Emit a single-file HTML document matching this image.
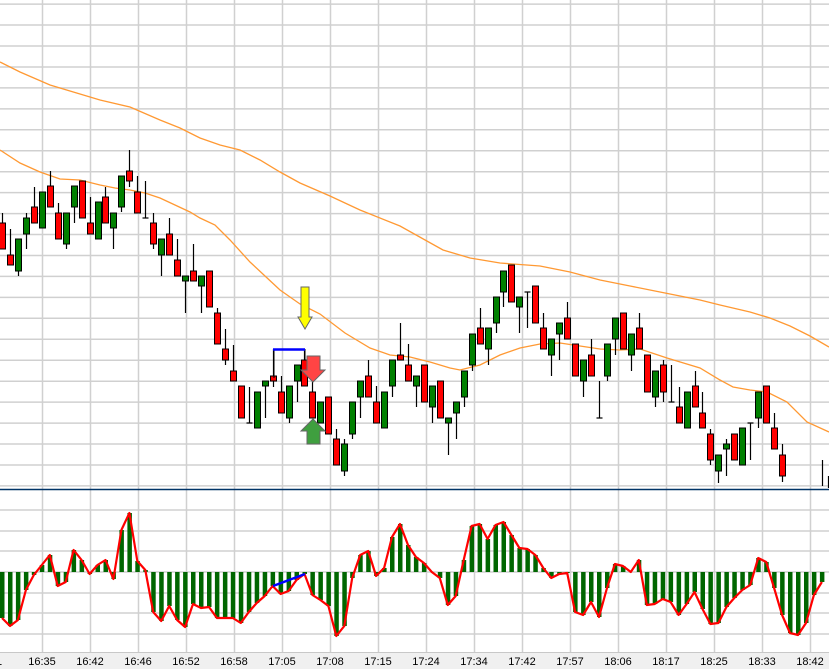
<!DOCTYPE html>
<html><head><style>
html,body{margin:0;padding:0;background:#fff;width:829px;height:669px;overflow:hidden}
svg{display:block}
text{font-family:"Liberation Sans",sans-serif;font-size:11px;fill:#000}
</style></head><body>
<svg id="s" width="829" height="669" xmlns="http://www.w3.org/2000/svg"></svg>
<script>
var s=document.getElementById('s'),h='';
h+='<rect x="0" y="0" width="829" height="669" fill="#fff"/>';
// grid
var gx=[];for(var x=-6;x<829;x+=48)gx.push(x);
gx.forEach(function(x){h+='<line x1="'+(x+0.5)+'" y1="0" x2="'+(x+0.5)+'" y2="652" stroke="#d0d0d0" stroke-width="1.5"/>';});
for(var y=4.1;y<488;y+=20.95)h+='<line x1="0" y1="'+y.toFixed(1)+'" x2="829" y2="'+y.toFixed(1)+'" stroke="#d0d0d0" stroke-width="1.5"/>';
[510,531,551,572,593,613,634].forEach(function(y){h+='<line x1="0" y1="'+y+'" x2="829" y2="'+y+'" stroke="#d0d0d0" stroke-width="1.5"/>';});
h+='<line x1="0" y1="489.5" x2="829" y2="489.5" stroke="#003366" stroke-width="1.5"/>';
// MAs
function pl(p){return '<polyline fill="none" stroke="#ff9933" stroke-width="1.3" points="'+p+'"/>';}
h+=pl("0,62 20,72 50,85 100,100 130,107 160,120 180,128 200,138 220,145 240,150 260,160 280,172 300,183 330,196 360,210 400,226 443,250 470,258 500,263 540,266 570,272 600,280 630,286 660,292 700,300 720,305 750,312 770,318 790,326 810,336 829,347");
h+=pl("0,150 20,163 40,172 60,179 80,180 100,185 115,188 130,190 145,193 160,198 175,205 190,212 200,218 215,225 230,240 250,262 265,276 280,290 300,304 320,314 345,333 370,348 390,355 410,357 430,362 450,368 460,370 480,365 500,355 520,348 540,344 560,343 580,346 600,349 620,350 640,349 667,358 700,368 720,380 733,387 750,390 767,392 787,402 807,422 829,432");
// candles [top,bot,hi,lo,c]
var C=[[223,249,213,249,'r'],[255,265,229,265,'r'],[239,271,239,276,'g'],[218,234,213,249,'g'],[207,223,187,223,'r'],[192,228,192,228,'g'],[186,207,171,207,'r'],[213,239,203,239,'r'],[213,244,213,249,'g'],[186,207,186,223,'g'],[181,218,181,218,'r'],[223,234,197,234,'r'],[202,239,202,239,'g'],[197,223,187,223,'r'],[213,228,213,249,'g'],[176,207,176,212,'g'],[171,181,150,187,'r'],[192,213,176,213,'r'],[218,218,181,218,'d'],[223,244,213,249,'r'],[239,255,239,276,'g'],[234,255,218,255,'r'],[260,276,239,276,'r'],[276,281,276,313,'g'],[271,281,244,281,'r'],[276,286,276,313,'g'],[271,307,271,307,'r'],[313,344,308,344,'r'],[349,360,329,365,'r'],[371,381,345,381,'r'],[386,418,386,418,'r'],[423,423,387,423,'d'],[392,428,392,428,'g'],[381,386,381,418,'g'],[376,381,349,387,'r'],[392,413,376,413,'r'],[386,418,386,423,'g'],[365,381,365,402,'g'],[360,386,349,386,'r'],[392,418,381,418,'r'],[402,423,402,423,'g'],[397,434,397,434,'r'],[439,465,429,465,'r'],[444,471,439,476,'g'],[402,434,402,439,'g'],[381,397,381,418,'g'],[376,397,360,397,'r'],[402,423,386,423,'r'],[392,428,392,428,'g'],[360,386,360,397,'g'],[355,360,323,360,'r'],[365,381,344,381,'r'],[376,386,376,407,'g'],[365,402,365,402,'r'],[386,407,386,423,'g'],[381,418,381,418,'r'],[418,423,418,455,'g'],[402,413,402,439,'g'],[371,397,371,407,'g'],[334,365,334,371,'g'],[328,344,308,344,'r'],[328,349,328,365,'g'],[297,323,297,333,'g'],[271,292,271,307,'g'],[265,302,265,302,'r'],[297,307,297,333,'g'],[292,292,292,328,'d'],[286,323,286,323,'r'],[328,349,313,349,'r'],[339,355,339,376,'g'],[323,334,323,360,'g'],[318,339,302,339,'r'],[344,376,344,376,'r'],[360,381,360,397,'g'],[355,376,339,376,'r'],[418,418,381,418,'d'],[344,376,344,381,'g'],[318,339,318,355,'g'],[313,349,313,349,'r'],[334,355,334,371,'g'],[328,349,313,349,'r'],[355,392,355,392,'r'],[371,397,371,407,'g'],[365,392,360,402,'r'],[402,402,365,402,'d'],[407,423,387,423,'r'],[392,428,392,428,'g'],[386,407,371,407,'r'],[413,428,392,428,'r'],[434,460,429,465,'r'],[455,471,455,483,'g'],[444,449,439,476,'g'],[434,460,434,460,'r'],[428,465,428,465,'g'],[423,423,423,460,'d'],[392,418,392,428,'g'],[386,423,386,423,'r'],[428,449,413,449,'r'],[455,476,444,482,'r']];
var SP=7.96;
C.forEach(function(c,i){var x=Math.round(2+SP*i)+0.5;
 h+='<line x1="'+x+'" y1="'+c[2]+'" x2="'+x+'" y2="'+c[3]+'" stroke="#000" stroke-width="1.2"/>';
 if(c[4]=='d'){h+='<line x1="'+(x-3)+'" y1="'+c[0]+'" x2="'+(x+3)+'" y2="'+c[0]+'" stroke="#000" stroke-width="1.2"/>';}
 else h+='<rect x="'+(x-3)+'" y="'+c[0]+'" width="6" height="'+Math.max(4,c[1]-c[0])+'" fill="'+(c[4]=='r'?'#ff0000':'#008000')+'" stroke="#000" stroke-width="1"/>';
});
h+='<line x1="822.5" y1="460" x2="822.5" y2="486" stroke="#000" stroke-width="1.2"/><line x1="828.5" y1="476" x2="828.5" y2="488" stroke="#000" stroke-width="1.2"/>';
// blue bracket
h+='<polyline points="274,378 274,349.5 305,349.5 305,360" fill="none" stroke="#000" stroke-width="1"/><line x1="273" y1="349.5" x2="305" y2="349.5" stroke="#0000ff" stroke-width="2.5"/>';
// arrows
h+='<polygon points="301,287 309,287 309,317 312,317 305,329 298,317 301,317" fill="#ffff00" stroke="#666" stroke-width="1"/>';
h+='<polygon points="307,356 320,356 320,370 325,370 313,382 301,370 307,370" fill="#ff4444" stroke="#666" stroke-width="1"/>';
h+='<polygon points="313,419 325,431 320,431 320,444 307,444 307,431 301,431" fill="#3f9f3f" stroke="#666" stroke-width="1"/>';
// histogram
var V=[618,626,620,590,575,565,555,586,582,550,560,574,565,560,579,530,513,561,570,612,621,606,620,627,604,608,607,618,618,618,623,612,603,596,586,594,591,580,574,595,600,606,636,626,578,555,551,576,568,537,524,545,557,563,572,578,605,596,560,526,524,539,525,522,535,548,549,555,568,578,574,573,612,615,602,617,588,564,566,572,560,605,604,599,602,615,604,592,609,624,623,607,598,590,585,558,562,588,615,633,635,623,595,582];
var pts=[];
V.forEach(function(v,i){var x=2+SP*i;pts.push(x.toFixed(1)+','+v);
 var t=Math.min(v,572),b=Math.max(v,572);h+='<rect x="'+(x-2).toFixed(1)+'" y="'+t+'" width="4.5" height="'+(b-t)+'" fill="#006600"/>';});
h+='<polyline points="'+pts.join(' ')+'" fill="none" stroke="#ff0000" stroke-width="2.2" stroke-linejoin="round"/>';
h+='<line x1="273" y1="586" x2="305" y2="574" stroke="#0000ff" stroke-width="2.5"/>';
// axis band
h+='<rect x="0" y="652" width="829" height="17" fill="#f0f0f0"/><line x1="0" y1="652.5" x2="829" y2="652.5" stroke="#c8c8c8"/>';
var L=["16:35","16:42","16:46","16:52","16:58","17:05","17:08","17:15","17:24","17:34","17:42","17:57","18:06","18:17","18:25","18:33","18:42"];
L.forEach(function(t,i){h+='<text x="'+(42+48*i)+'" y="665" text-anchor="middle">'+t+'</text>';});
h+='<text x="-4" y="665">1</text>';
s.innerHTML=h;
</script>
</body></html>
